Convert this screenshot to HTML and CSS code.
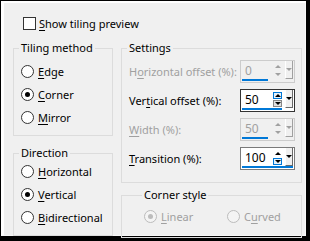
FILE: index.html
```html
<!DOCTYPE html>
<html lang="en">
<head>
  <meta charset="UTF-8">
  <title>Tiling options</title>
  <link rel="stylesheet" href="styles.css">
</head>
<body>
  <div class="frame">
    <div class="panel">
      <label class="check-row">
        <span class="checkbox"></span>
        <span><u>S</u>how tiling preview</span>
      </label>

      <div class="columns">
        <div class="col-left">
          <fieldset class="group tiling">
            <legend>Tiling method</legend>
            <div class="radio-row"><span class="radio"></span><span><u>E</u>dge</span></div>
            <div class="radio-row"><span class="radio checked"></span><span><u>C</u>orner</span></div>
            <div class="radio-row"><span class="radio"></span><span><u>M</u>irror</span></div>
          </fieldset>

          <fieldset class="group direction">
            <legend>Direction</legend>
            <div class="radio-row"><span class="radio"></span><span><u>H</u>orizontal</span></div>
            <div class="radio-row"><span class="radio checked"></span><span><u>V</u>ertical</span></div>
            <div class="radio-row"><span class="radio"></span><span><u>B</u>idirectional</span></div>
          </fieldset>
        </div>

        <div class="col-right">
          <fieldset class="group settings">
            <legend>Settings</legend>

            <div class="setting disabled">
              <span class="setting-label">H<u>o</u>rizontal offset (%):</span>
              <div class="spin">
                <div class="spin-main">
                  <span class="spin-value">0</span>
                  <span class="arrows">
                    <span class="arr up"></span>
                    <span class="arr down"></span>
                  </span>
                  <span class="drop"></span>
                </div>
                <div class="spin-bar" style="width: 26px"></div>
              </div>
            </div>

            <div class="setting">
              <span class="setting-label">Ver<u>t</u>ical offset (%):</span>
              <div class="spin focus">
                <div class="spin-main">
                  <span class="spin-value">50</span>
                  <span class="arrows">
                    <span class="arr up hot"></span>
                    <span class="arr down pressed"></span>
                  </span>
                  <span class="drop"></span>
                </div>
                <div class="spin-bar" style="width: 40px"></div>
              </div>
            </div>

            <div class="setting disabled">
              <span class="setting-label"><u>W</u>idth (%):</span>
              <div class="spin">
                <div class="spin-main">
                  <span class="spin-value">50</span>
                  <span class="arrows">
                    <span class="arr up"></span>
                    <span class="arr down"></span>
                  </span>
                  <span class="drop"></span>
                </div>
                <div class="spin-bar" style="width: 26px"></div>
              </div>
            </div>

            <div class="setting">
              <span class="setting-label"><u>T</u>ransition (%):</span>
              <div class="spin">
                <div class="spin-main">
                  <span class="spin-value">100</span>
                  <span class="arrows">
                    <span class="arr up"></span>
                    <span class="arr down hot"></span>
                  </span>
                  <span class="drop"></span>
                </div>
                <div class="spin-bar" style="width: 51px"></div>
              </div>
            </div>
          </fieldset>

          <fieldset class="group corner">
            <legend>Corner style</legend>
            <div class="corner-row">
              <div class="radio-row disabled"><span class="radio checked"></span><span><u>L</u>inear</span></div>
              <div class="radio-row disabled"><span class="radio"></span><span>C<u>u</u>rved</span></div>
            </div>
          </fieldset>
        </div>
      </div>
    </div>
  </div>
</body>
</html>
```

FILE: styles.css
```css
body {
  margin: 0;
  font-family: 'Noto Sans', 'Open Sans', sans-serif;
  font-size: 11px;
  color: #000;
}
.frame {
  width: 310px;
  height: 241px;
  box-sizing: border-box;
  background: #000;
  padding: 1px 4px 5px 1px;
}
.panel {
  height: 100%;
  box-sizing: border-box;
  background: #f0f0f0;
  border-left: 3px solid #fff;
  border-top: 2px solid #fff;
  border-right: 1px solid #f7f7f7;
  border-bottom: 1px solid #f7f7f7;
  padding: 14px 0 0 9px;
}
u {
  text-underline-offset: 2px;
}
.check-row {
  display: flex;
  align-items: center;
  gap: 3px;
  margin-left: 10px;
  height: 13px;
}
.checkbox {
  width: 13px;
  height: 13px;
  box-sizing: border-box;
  border: 1px solid #333;
  background: #fff;
}
.columns {
  display: flex;
  gap: 8px;
  margin-top: 11px;
}
.col-left {
  width: 100px;
}
.col-right {
  width: 181px;
}
.group {
  margin: 0;
  border: 1px solid #dcdcdc;
  padding: 0 0 0 7px;
  min-width: 0;
}
.group legend {
  padding: 0 2px;
  margin-left: -2px;
  line-height: 14px;
}
.tiling {
  padding-top: 5px;
  padding-bottom: 6px;
}
.direction {
  margin-top: 10px;
  padding-bottom: 6px;
}
.radio-row {
  display: flex;
  align-items: center;
  gap: 4px;
  height: 23px;
}
.radio {
  position: relative;
  width: 13px;
  height: 13px;
  box-sizing: border-box;
  border: 1px solid #333;
  border-radius: 50%;
  background: #fff;
}
.radio.checked::after {
  content: "";
  position: absolute;
  left: 3px;
  top: 3px;
  width: 5px;
  height: 5px;
  border-radius: 50%;
  background: #000;
}
.radio-row.disabled {
  color: #a0a0a0;
}
.radio-row.disabled .radio {
  border-color: #bcbcbc;
  background: #f4f4f4;
}
.radio-row.disabled .radio.checked::after {
  background: #bcbcbc;
}
.settings {
  padding-top: 2px;
  padding-right: 6px;
  padding-bottom: 9px;
}
.setting {
  display: flex;
  align-items: center;
  justify-content: space-between;
  height: 29px;
}
.setting.disabled .setting-label {
  color: #a0a0a0;
}
.spin {
  width: 55px;
  height: 23px;
  box-sizing: border-box;
  border: 1px solid #7a7a7a;
  background: #fff;
  display: flex;
  flex-direction: column;
}
.spin.focus {
  border-color: #333;
}
.setting.disabled .spin {
  border-color: #cccccc;
  background: #f0f0f0;
  color: #a0a0a0;
}
.spin-main {
  flex: 1;
  display: flex;
  align-items: stretch;
  min-height: 0;
}
.spin-value {
  flex: 1;
  padding-left: 4px;
  font-size: 12px;
  display: flex;
  align-items: center;
}
.arrows {
  display: flex;
  flex-direction: column;
  justify-content: center;
  gap: 1px;
  margin-right: 3px;
}
.arr {
  width: 9px;
  height: 7px;
  box-sizing: border-box;
  border: 1px solid transparent;
  display: flex;
  align-items: center;
  justify-content: center;
}
.arr::after {
  content: "";
  border-left: 3px solid transparent;
  border-right: 3px solid transparent;
}
.arr.up::after {
  border-bottom: 3px solid #000;
}
.arr.down::after {
  border-top: 3px solid #000;
}
.arr.hot {
  border-color: #0078d7;
  background: #e5f1fb;
}
.arr.pressed {
  border-color: #888;
  background: #e0e0e0;
}
.setting.disabled .arr.up::after {
  border-bottom-color: #a0a0a0;
}
.setting.disabled .arr.down::after {
  border-top-color: #a0a0a0;
}
.drop {
  width: 8px;
  margin-right: 1px;
  box-sizing: border-box;
  background: #f0f0f0;
  border-left: 1px solid #fff;
  border-right: 1px solid #696969;
  border-bottom: 1px solid #696969;
  display: flex;
  justify-content: center;
  padding-top: 7px;
}
.drop::after {
  content: "";
  height: 0;
  border-left: 3px solid transparent;
  border-right: 3px solid transparent;
  border-top: 3px solid #000;
}
.setting.disabled .drop {
  border-right-color: #a0a0a0;
  border-bottom-color: #a0a0a0;
}
.setting.disabled .drop::after {
  border-top-color: #a0a0a0;
}
.spin-bar {
  height: 2px;
  margin: 0 0 1px 1px;
  background: #0078d7;
}
.corner {
  margin-top: 5px;
  padding: 3px 0 9px 22px;
}
.corner-row {
  display: flex;
}
.corner-row .radio-row:first-child {
  width: 83px;
}
```
